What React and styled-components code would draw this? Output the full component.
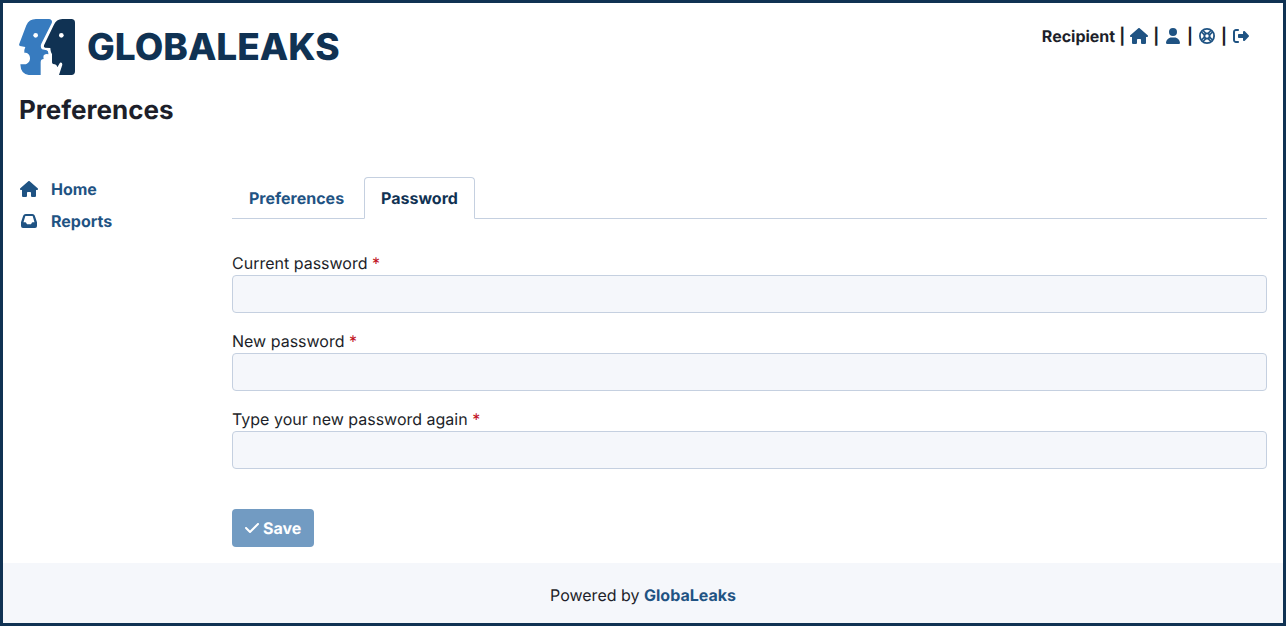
import React from "react";
import styled, { createGlobalStyle } from "styled-components";
import {
  FaHouse,
  FaUser,
  FaRightFromBracket,
  FaCheck,
} from "react-icons/fa6";

const GlobalStyle = createGlobalStyle`
  *, *::before, *::after { box-sizing: border-box; }
  body {
    margin: 0;
    background: #fff;
    color: #1d1f2a;
    font-family: Inter, "Liberation Sans", sans-serif;
    font-size: 16px;
    line-height: 24px;
    text-rendering: geometricPrecision;
  }
  button, input { text-rendering: inherit; }
  a { color: #1f5383; font-weight: 700; text-decoration: none; }
`;

const Page = styled.div`
  display: flex;
  flex-direction: column;
  min-height: 100vh;
  border: 3px solid #103253;
`;

const Header = styled.header`
  display: flex;
  justify-content: space-between;
  align-items: flex-start;
  padding: 16px 32px 0 16px;
`;

const Brand = styled.a`
  display: flex;
  align-items: center;
  gap: 12px;
  color: #103253;
`;

const Wordmark = styled.span`
  font-size: 37px;
  line-height: 56px;
  font-weight: 800;
`;

const UserBar = styled.nav`
  display: flex;
  align-items: center;
  gap: 4px;
  padding-top: 5px;
  font-weight: 700;
`;

const IconLink = styled.a`
  display: flex;
  justify-content: center;
  width: 20px;
`;

const Title = styled.h1`
  margin: 0;
  padding: 18px 16px 0;
  font-size: 26px;
  line-height: 36px;
  font-weight: 700;
`;

const Body = styled.div`
  display: flex;
  flex: 1;
  padding: 48px 16px 16px;
`;

const Sidebar = styled.nav`
  flex: 0 0 213px;
  display: flex;
  flex-direction: column;
  gap: 8px;
`;

const SideLink = styled.a`
  display: flex;
  align-items: center;
  gap: 12px;
`;

const SideIcon = styled.span`
  display: flex;
  justify-content: center;
  width: 20px;
`;

const Content = styled.main`
  flex: 1;
  min-width: 0;
`;

const Tabs = styled.div`
  display: flex;
  gap: 3px;
  border-bottom: 1px solid #c5d0e0;
`;

const Tab = styled.button`
  margin-bottom: -1px;
  padding: 8px 16px;
  border: 1px solid ${(p) => (p.$active ? "#c5d0e0" : "transparent")};
  border-bottom-color: ${(p) => (p.$active ? "#fff" : "#c5d0e0")};
  border-radius: 4px 4px 0 0;
  background: ${(p) => (p.$active ? "#fff" : "transparent")};
  color: ${(p) => (p.$active ? "#103253" : "#1f5383")};
  font: inherit;
  font-weight: 700;
`;

const Form = styled.form`
  display: flex;
  flex-direction: column;
  gap: 16px;
  padding-top: 32px;
`;

const Label = styled.label`
  display: block;
`;

const Required = styled.span`
  color: #c1121f;
`;

const Input = styled.input`
  display: block;
  width: 100%;
  height: 38px;
  padding: 6px 12px;
  border: 1px solid #c5d0e0;
  border-radius: 4px;
  background: #f5f7fb;
  font: inherit;
`;

const SaveButton = styled.button`
  display: flex;
  align-items: center;
  align-self: flex-start;
  gap: 4px;
  height: 38px;
  margin-top: 24px;
  padding: 0 13px;
  border: 0;
  border-radius: 4px;
  background: #729bc2;
  color: #fff;
  font: inherit;
  font-weight: 700;
`;

const CheckIcon = styled(FaCheck)`
  width: 14px;
  height: 16px;
`;

const Footer = styled.footer`
  padding: 20px 16px 16px;
  background: #f5f7fb;
  text-align: center;
`;

const Logo = () => (
  <svg width="56" height="56" viewBox="57 57 168 168" aria-hidden="true">
    <path
      fill="#377bbf"
      d="M108 57H147Q159 59 155 70L124 131Q120 141 126 148L140 151Q146 153 145 163Q138 161 132 165Q129 168 131 177Q122 177 122 187V225H86Q62 222 61 193H72C84 194 90 184 90 175C90 164 84 158 73 158V150L76 141L60 138Q56 137 58 131L79 76Q87 57 108 57Z"
    />
    <path
      fill="#103253"
      d="M187 57H214Q225 57 225 68V214Q225 225 214 225H177L187 194Q187 186 180 188L172 202Q170 192 159 192Q155 190 156 183V162Q152 158 151 144L135 143Q130 142 132 136L161 76Q169 57 187 57Z"
    />
    <circle cx="107" cy="106" r="7" fill="#fff" />
    <circle cx="184" cy="106" r="7" fill="#fff" />
  </svg>
);

const LifeRing = ({ size }) => (
  <svg width={size} height={size} viewBox="0 0 16 16" fill="none" stroke="currentColor" aria-hidden="true">
    <circle cx="8" cy="8" r="7.1" strokeWidth="1.8" />
    <circle cx="8" cy="8" r="2.6" strokeWidth="1.8" />
    <path
      strokeWidth="1.6"
      d="M2.5 4L5.4 6.9M4 2.5L6.9 5.4M12 2.5L9.1 5.4M13.5 4L10.6 6.9M13.5 12L10.6 9.1M12 13.5L9.1 10.6M4 13.5L6.9 10.6M2.5 12L5.4 9.1"
    />
  </svg>
);

const InboxIcon = () => (
  <svg width="16" height="14" viewBox="0 0 48 42" fill="currentColor" aria-hidden="true">
    <path
      fillRule="evenodd"
      d="M14 0H34Q40 0 41.500 5L48 25V36Q48 42 42 42H6Q0 42 0 36V25L6.500 5Q8 0 14 0ZM13 6L7.500 25H13Q15 25 16 27L17 29Q18 31 20 31H28Q30 31 31 29L32 27Q33 25 35 25H40.500L35 6Z"
    />
  </svg>
);

const userLinks = [
  { label: "Home", Icon: FaHouse, size: 18 },
  { label: "Preferences", Icon: FaUser, size: 16 },
  { label: "Help", Icon: LifeRing, size: 16 },
  { label: "Log out", Icon: FaRightFromBracket, size: 16 },
];

const fields = [
  { id: "current", label: "Current password" },
  { id: "new", label: "New password" },
  { id: "confirm", label: "Type your new password again" },
];

export default function App() {
  return (
    <Page>
      <GlobalStyle />
      <Header>
        <Brand href="#">
          <Logo />
          <Wordmark>GLOBALEAKS</Wordmark>
        </Brand>
        <UserBar>
          <span>Recipient</span>
          {userLinks.map(({ label, Icon, size }) => (
            <React.Fragment key={label}>
              <span>|</span>
              <IconLink href="#" aria-label={label}>
                <Icon size={size} />
              </IconLink>
            </React.Fragment>
          ))}
        </UserBar>
      </Header>
      <Title>Preferences</Title>
      <Body>
        <Sidebar>
          <SideLink href="#">
            <SideIcon><FaHouse size={18} /></SideIcon>
            Home
          </SideLink>
          <SideLink href="#">
            <SideIcon><InboxIcon /></SideIcon>
            Reports
          </SideLink>
        </Sidebar>
        <Content>
          <Tabs role="tablist">
            <Tab type="button" role="tab" aria-selected="false">Preferences</Tab>
            <Tab type="button" role="tab" aria-selected="true" $active>Password</Tab>
          </Tabs>
          <Form>
            {fields.map(({ id, label }) => (
              <div key={id}>
                <Label htmlFor={id}>
                  {label} <Required>*</Required>
                </Label>
                <Input id={id} type="password" />
              </div>
            ))}
            <SaveButton type="button">
              <CheckIcon />
              Save
            </SaveButton>
          </Form>
        </Content>
      </Body>
      <Footer>
        Powered by <a href="#">GlobaLeaks</a>
      </Footer>
    </Page>
  );
}
